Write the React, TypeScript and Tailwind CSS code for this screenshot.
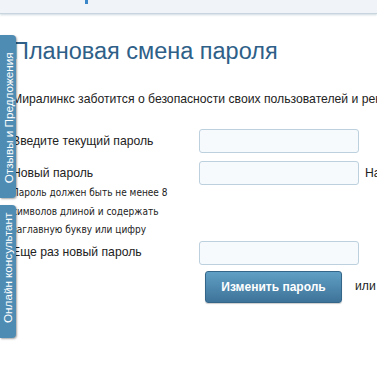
import React from "react";

const inputCls =
  "w-[160px] h-[24px] shrink-0 rounded-[3px] border border-[#bdd0de] bg-[#f6fafd] outline-none";

export default function App() {
  return (
    <div className="relative w-[377px] h-[374px] overflow-hidden bg-white font-['Liberation_Sans',Arial,sans-serif] text-[#222]">
      {/* top bar */}
      <div className="relative h-[14px] bg-[#f0f4f8] border-b border-[#c8d5df] shadow-[0_1px_2px_rgba(120,150,170,0.35)]">
        <span className="absolute left-[85px] top-0 w-[3px] h-[4px] bg-[#3a86c8]" />
      </div>

      <main className="pl-[12px] pt-[22px]">
        <h1 className="text-[23.5px] leading-[30px] text-[#2e6088] whitespace-nowrap">
          Плановая смена пароля
        </h1>
        <p className="mt-[24px] text-[12.2px] leading-[18px] whitespace-nowrap">
          Миралинкс заботится о безопасности своих пользователей и рекомендует
        </p>

        <div className="mt-[21px] grid grid-cols-[187px_1fr] gap-y-[8px] items-center text-[12.2px]">
          <label>Введите текущий пароль</label>
          <input type="password" className={inputCls} />

          <label>Новый пароль</label>
          <div className="flex items-center gap-[6px] whitespace-nowrap">
            <input type="password" className={inputCls} />
            <span>Надежность пароля</span>
          </div>
        </div>

        <div className="-mt-[1px] text-[10px] leading-[18.5px] font-['DejaVu_Sans_Condensed','DejaVu_Sans',Verdana,sans-serif] text-[#222]">
          <div>Пароль должен быть не менее 8</div>
          <div>символов длиной и содержать</div>
          <div>заглавную букву или цифру</div>
        </div>

        <div className="mt-[1px] grid grid-cols-[187px_1fr] items-center text-[12.2px]">
          <label>Еще раз новый пароль</label>
          <input type="password" className={inputCls} />
        </div>

        <div className="mt-[6px] ml-[193px] flex items-center gap-[13px] whitespace-nowrap">
          <button className="w-[137px] h-[32px] shrink-0 rounded-[3px] border border-[#34668a] bg-gradient-to-b from-[#609fc5] to-[#3e7399] text-white text-[12px] font-bold shadow-[0_1px_1px_rgba(0,0,0,0.2)]">
            Изменить пароль
          </button>
          <span className="text-[12.2px]">или отменить</span>
        </div>
      </main>

      {/* side tabs */}
      <div className="absolute left-0 top-[35px] w-[16px] h-[163px] rounded-r-[4px] bg-[#4f8cb3] shadow-[1px_1px_2px_rgba(0,0,0,0.35)] flex items-center justify-center pt-[2px]">
        <span className="-rotate-90 whitespace-nowrap text-white text-[11.7px] leading-none">
          Отзывы и Предложения
        </span>
      </div>
      <div className="absolute left-0 top-[205px] w-[16px] h-[133px] rounded-r-[4px] bg-[#4f8cb3] shadow-[1px_1px_2px_rgba(0,0,0,0.35)] flex items-center justify-center pb-[7px]">
        <span className="-rotate-90 whitespace-nowrap text-white text-[11.7px] leading-none">
          Онлайн консультант
        </span>
      </div>
    </div>
  );
}
